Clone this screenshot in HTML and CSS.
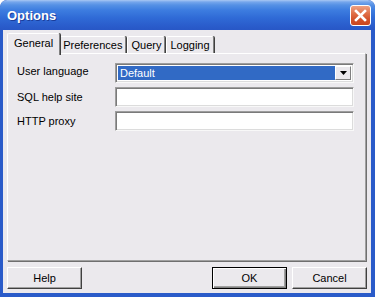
FILE: index.html
```html
<!DOCTYPE html>
<html>
<head>
<meta charset="utf-8">
<link rel="stylesheet" href="styles.css">
</head>
<body>
<div class="window">
  <div class="titlebar">
    <span class="title">Options</span>
    <button class="close" aria-label="Close">
      <svg width="13" height="13" viewBox="0 0 13 13"><path d="M2 2 L11 11 M11 2 L2 11" stroke="#fff" stroke-width="2.6" stroke-linecap="square"/></svg>
    </button>
  </div>
  <div class="content">
    <div class="tabs">
      <div class="tab active">General</div>
      <div class="tab">Preferences</div>
      <div class="tab">Query</div>
      <div class="tab">Logging</div>
    </div>
    <div class="panel">
      <div class="form">
        <label class="lbl lbl-first">User language</label>
        <div class="combo">
          <div class="combo-value">Default</div>
          <div class="combo-btn"><svg width="7" height="4" viewBox="0 0 7 4"><path d="M0 0 H7 L3.5 4 Z" fill="#000"/></svg></div>
        </div>
        <label class="lbl">SQL help site</label>
        <div class="field"></div>
        <label class="lbl">HTTP proxy</label>
        <div class="field"></div>
      </div>
    </div>
    <div class="footer">
      <button class="btn">Help</button>
      <div class="spacer"></div>
      <button class="btn default">OK</button>
      <button class="btn">Cancel</button>
    </div>
  </div>
</div>
</body>
</html>
```
FILE: styles.css
```css
html, body {
  margin: 0;
  padding: 0;
  background: #ffffff;
}
.window {
  width: 375px;
  height: 297px;
  box-sizing: border-box;
  display: flex;
  flex-direction: column;
  background: #2a5bc9;
  border-radius: 7px 7px 0 0;
  overflow: hidden;
  font-family: "Liberation Sans", Arial, sans-serif;
  font-size: 11px;
  color: #000;
}
.titlebar {
  height: 30px;
  flex: none;
  display: flex;
  align-items: center;
  padding: 0 4px 0 7px;
  background: linear-gradient(#a9c8f3 0, #75a6ec 2px, #5591e5 5px, #3d7de0 10px, #2f6ad6 18px, #2a5ccb 26px, #2857c6 30px);
  border-radius: 7px 7px 0 0;
}
.title {
  flex: 1;
  color: #fff;
  font-weight: bold;
  font-size: 13px;
  text-shadow: 1px 1px 0 #1a3d9a;
  padding-top: 1px;
}
.close {
  width: 21px;
  height: 21px;
  margin-top: 1px;
  padding: 0;
  border: 1px solid #fff;
  border-radius: 3px;
  background: linear-gradient(#eda285 0, #e06f47 40%, #d3522b 70%, #c9461f 100%);
  display: flex;
  align-items: center;
  justify-content: center;
}
.content {
  flex: 1;
  margin: 0 4px 4px 3px;
  background: #ebe9ed;
  display: flex;
  flex-direction: column;
  padding: 3px 4px 4px 4px;
}
.tabs {
  height: 20px;
  display: flex;
  align-items: flex-end;
  padding-left: 2px;
  position: relative;
  z-index: 1;
}
.tab {
  height: 17px;
  box-sizing: border-box;
  padding: 2px 3px 0 3px;
  border-top: 1px solid #fff;
  border-left: 1px solid #fff;
  border-right: 1px solid #808080;
  box-shadow: 1px 0 0 #404040;
  border-radius: 2px 2px 0 0;
  background: #ebe9ed;
  line-height: 13px;
  margin-right: 1px;
}
.tab.active {
  height: 22px;
  margin: 0 -1px -2px -2px;
  padding: 3px 6px 0 6px;
  position: relative;
  z-index: 2;
  border-bottom: none;
}
.panel {
  height: 208px;
  box-sizing: border-box;
  border-top: 1px solid #fff;
  border-left: 1px solid #fff;
  border-right: 1px solid #a0a0a0;
  border-bottom: 1px solid #a0a0a0;
  box-shadow: 1px 1px 0 #6f6f6f;
  padding: 9px 11px 0 9px;
  margin-right: 1px;
}
.form {
  display: grid;
  grid-template-columns: 98px 1fr;
  row-gap: 4px;
  align-items: center;
}
.lbl {
  line-height: 13px;
}
.lbl-first {
  margin-top: -4px;
}
.combo, .field {
  height: 20px;
  box-sizing: border-box;
  border-top: 1px solid #9d9d9d;
  border-left: 1px solid #9d9d9d;
  border-right: 1px solid #f8f8f8;
  border-bottom: 1px solid #f8f8f8;
  box-shadow: inset 1px 1px 0 #7a7a7a, inset -1px -1px 0 #dcdcdc;
  background: #fff;
}
.combo {
  display: flex;
  padding: 2px;
}
.combo-value {
  flex: 1;
  background: #316ac5;
  color: #fff;
  line-height: 15px;
  padding-left: 2px;
  box-sizing: border-box;
}
.combo-btn {
  width: 16px;
  box-sizing: border-box;
  background: #ebe9ed;
  border-top: 1px solid #fff;
  border-left: 1px solid #fff;
  border-right: 1px solid #808080;
  border-bottom: 1px solid #808080;
  display: flex;
  align-items: center;
  justify-content: center;
}
.footer {
  margin-top: 6px;
  height: 22px;
  display: flex;
  gap: 5px;
}
.spacer {
  flex: 1;
}
.btn {
  width: 75px;
  height: 22px;
  box-sizing: border-box;
  padding: 0;
  font-family: "Liberation Sans", Arial, sans-serif;
  font-size: 11px;
  color: #000;
  background: #ebe9ed;
  border-top: 1px solid #fff;
  border-left: 1px solid #fff;
  border-right: 1px solid #404040;
  border-bottom: 1px solid #404040;
  box-shadow: inset -1px -1px 0 #a0a0a0;
}
.btn.default {
  outline: none;
  border: 1px solid #000;
  box-shadow: inset 1px 1px 0 #fff, inset -1px -1px 0 #808080, inset -2px -2px 0 #a0a0a0;
}
```
